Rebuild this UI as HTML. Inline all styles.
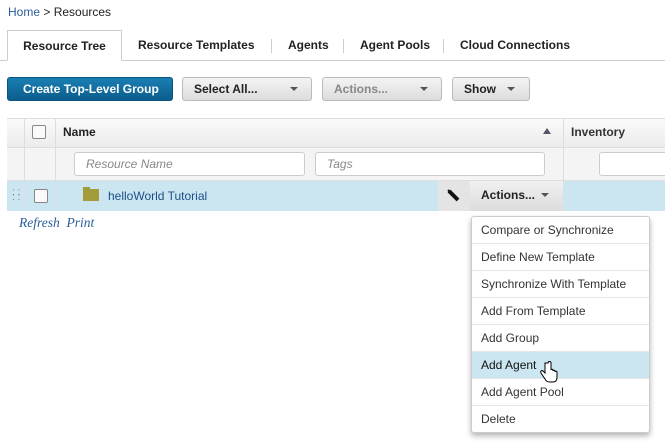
<!DOCTYPE html>
<html><head><style>
*{box-sizing:border-box;margin:0;padding:0}
body{width:665px;height:445px;overflow:hidden;background:#fff;font-family:"Liberation Sans",Arial,sans-serif;font-size:12px;color:#222;position:relative}
.a{position:absolute}
.tab{position:absolute;top:30px;height:30px;line-height:31px;font-weight:bold;font-size:12px;color:#222}
.sep{position:absolute;top:39px;width:1px;height:14px;background:#ccc}
.btn{position:absolute;top:77px;height:24px;border:1px solid #bbb;border-radius:3px;background:linear-gradient(#f4f4f4,#dcdcdc);font-weight:bold;line-height:22px;padding-left:11px}
.car{position:absolute;top:9px;width:0;height:0;border-left:4px solid transparent;border-right:4px solid transparent;border-top:4px solid #555}
.inp{position:absolute;height:24px;border:1px solid #ccc;border-radius:3px;background:#fff;font-style:italic;color:#888;line-height:22px;padding-left:11px}
.mi{height:27px;line-height:26px;padding-left:9px;border-bottom:1px solid #e6e6e6;color:#333}
</style></head><body>
<div class="a" style="left:8px;top:5px;"><span style="color:#2a5e9a">Home</span> &gt; Resources</div>
<div class="a" style="left:0;top:60px;width:665px;height:1px;background:#ccc"></div>
<div class="tab" style="left:7px;width:115px;border:1px solid #ccc;border-bottom:1px solid #fff;background:#fff;text-align:center;height:31px">Resource Tree</div>
<div class="tab" style="left:138px">Resource Templates</div>
<div class="sep" style="left:271px"></div>
<div class="tab" style="left:288px">Agents</div>
<div class="sep" style="left:343px"></div>
<div class="tab" style="left:360px">Agent Pools</div>
<div class="sep" style="left:443px"></div>
<div class="tab" style="left:460px">Cloud Connections</div>

<div class="btn" style="left:7px;width:166px;background:linear-gradient(#1a7fb3,#0b5d8c);border-color:#0a5480;color:#fff;padding-left:15px">Create Top-Level Group</div>
<div class="btn" style="left:182px;width:130px">Select All...<span class="car" style="left:107px"></span></div>
<div class="btn" style="left:322px;width:120px;color:#888">Actions...<span class="car" style="left:97px"></span></div>
<div class="btn" style="left:452px;width:78px">Show<span class="car" style="left:54px"></span></div>

<div class="a" style="left:7px;top:118px;width:658px;height:30px;background:linear-gradient(#fafafa,#ececec);border-top:1px solid #ddd;border-bottom:1px solid #ddd"></div>
<div class="a" style="left:7px;top:148px;width:658px;height:33px;background:#f4f4f4;border-bottom:1px solid #ddd"></div>
<div class="a" style="left:7px;top:181px;width:658px;height:30px;background:#cbe6f0"></div>
<div class="a" style="left:24px;top:118px;width:1px;height:93px;background:#ddd"></div>
<div class="a" style="left:55px;top:118px;width:1px;height:93px;background:#ddd"></div>
<div class="a" style="left:563px;top:118px;width:1px;height:63px;background:#ddd"></div>
<div class="a" style="left:32px;top:125px;width:14px;height:14px;border:1px solid #888;border-radius:2px;background:#fafafa"></div>
<div class="a" style="left:34px;top:189px;width:14px;height:14px;border:1px solid #888;border-radius:2px;background:#fafafa"></div>
<div class="a" style="left:63px;top:125px;font-weight:bold">Name</div>
<div class="a" style="left:543px;top:128px;border-left:4px solid transparent;border-right:4px solid transparent;border-bottom:6px solid #556"></div>
<div class="a" style="left:571px;top:125px;font-weight:bold;color:#333">Inventory</div>
<div class="inp" style="left:74px;top:152px;width:231px">Resource Name</div>
<div class="inp" style="left:315px;top:152px;width:230px">Tags</div>
<div class="inp" style="left:599px;top:152px;width:80px"></div>
<div class="a" style="left:12px;top:190px;color:#777;font-size:10px;line-height:5px">: :<br>: :</div>
<div class="a" style="left:83px;top:189px;width:16px;height:12px;background:#a39c3a"></div>
<div class="a" style="left:83px;top:187px;width:7px;height:3px;background:#a39c3a"></div>
<div class="a" style="left:108px;top:189px;color:#1d4f86">helloWorld Tutorial</div>
<div class="a" style="left:438px;top:181px;width:32px;height:30px;background:#e4e4e4"></div>
<svg class="a" style="left:446px;top:188px" width="16" height="16"><path d="M3 3 L12 12" stroke="#111" stroke-width="4"/><path d="M2 2 L4 4" stroke="#111" stroke-width="2"/></svg>
<div class="a" style="left:470px;top:181px;width:93px;height:30px;background:linear-gradient(#f0f0f0,#dcdcdc);font-weight:bold;line-height:29px;padding-left:11px">Actions...<span class="car" style="left:71px;top:12px"></span></div>
<div class="a" style="left:19px;top:215px;font-family:'Liberation Serif',serif;font-style:italic;color:#2a5e9a;font-size:13.5px">Refresh&nbsp;&nbsp;Print</div>

<div class="a" style="left:471px;top:216px;width:179px;height:217px;background:#fff;border:1px solid #ccc;border-radius:3px;box-shadow:0 3px 6px rgba(0,0,0,.3)">
<div class="mi">Compare or Synchronize</div>
<div class="mi">Define New Template</div>
<div class="mi">Synchronize With Template</div>
<div class="mi">Add From Template</div>
<div class="mi">Add Group</div>
<div class="mi" style="background:#cbe6f0;color:#111">Add Agent</div>
<div class="mi">Add Agent Pool</div>
<div class="mi" style="border-bottom:none">Delete</div>
</div>
<svg class="a" style="left:540px;top:361px" width="20" height="22"><path d="M5 2 v10 l-2 -2 c-1 -1 -3 0 -2 2 l4 6 c1 2 2 3 5 3 h3 c3 0 4 -2 4 -5 v-5 c0 -1 -2 -1 -2 0 v-1 c0 -1 -2 -1 -2 0 v-1 c0 -1 -2 -1 -2 0 v-7 c0 -2 -3 -2 -3 0z" fill="#fff" stroke="#000" stroke-width="1"/></svg>
</body></html>
